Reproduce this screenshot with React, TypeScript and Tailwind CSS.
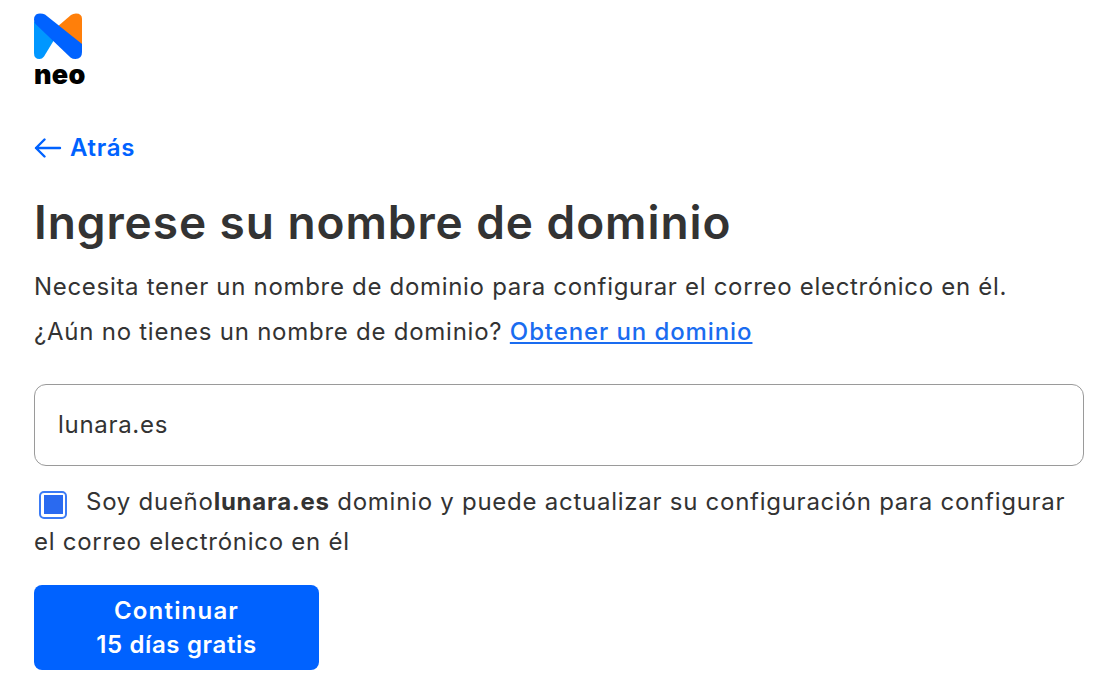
const font = { fontFamily: "Inter, 'Open Sans', sans-serif" };

function NeoLogo() {
  return (
    <div className="flex w-[52px] flex-col items-start">
      <svg width="48" height="46" viewBox="0 0 48 46" fill="none" className="block">
        <path d="M23 14 L37 2 Q39 0.500 42 0.500 Q48 0.500 48 6 L48 36 L30 26 Z" fill="#ff7f0a" />
        <path d="M0 8 L20 27 L10 43.500 Q8 46 5.500 46 Q0 46 0 40 Z" fill="#0097ff" />
        <path d="M2 1.500 Q4 0.500 6 0.500 Q9 0.500 11 1.500 L48 31 L48 39 Q48 46 41.500 46 Q38.500 46 36.500 44.500 L1.500 11 Q0 9.500 0 6.500 Q0 3.500 2 1.500 Z" fill="#0062ff" />
      </svg>
      <span className="mt-[3px] text-[27px] leading-[26px] font-black tracking-[0.3px] text-black">neo</span>
    </div>
  );
}

export default function App() {
  return (
    <div className="min-h-[687px] bg-white pt-[13px] pr-[9px] pl-[34px] text-[#333333]" style={font}>
      <NeoLogo />

      <a className="mt-[45px] flex items-center gap-[8px] text-[24px] leading-[30px] font-semibold tracking-[0.7px] text-[#0062ff]">
        <svg width="28" height="20" viewBox="0 0 28 20" fill="none" stroke="#0062ff" strokeWidth="2.4" strokeLinecap="round" strokeLinejoin="round">
          <path d="M2 10 H26 M10.500 1.500 L2 10 L10.500 18.500" />
        </svg>
        Atrás
      </a>

      <h1 className="mt-[28px] text-[46px] leading-[62px] font-semibold tracking-[0.93px]">Ingrese su nombre de dominio</h1>

      <p className="mt-[16px] text-[24px] leading-[36px] tracking-[0.69px]">Necesita tener un nombre de dominio para configurar el correo electrónico en él.</p>
      <p className="mt-[9px] text-[24px] leading-[36px] tracking-[0.75px]">
        ¿Aún no tienes un nombre de dominio? <a className="font-medium tracking-[0.9px] text-[#1a6cf0] underline">Obtener un dominio</a>
      </p>

      <div className="mt-[34px] flex h-[82px] items-center rounded-[12px] border border-[#9a9a9a] px-[23px] text-[24px] tracking-[0.7px]">lunara.es</div>

      <div className="mt-[16px] text-[24px] leading-[40px] tracking-[0.74px]">
        <span className="mr-[19px] ml-[5px] inline-flex h-[28px] w-[28px] items-center justify-center rounded-[5px] border-2 border-[#3b7bf5] align-[-4px]">
          <span className="h-[19px] w-[19px] bg-[#2a6af0]" />
        </span>
        Soy dueño<strong className="font-bold">lunara.es</strong> dominio y puede actualizar su configuración para configurar el correo electrónico en él
      </div>

      <button className="mt-[23px] flex h-[85px] w-[285px] flex-col items-center justify-center rounded-[8px] bg-[#0062ff] text-[24px] leading-[34px] font-semibold text-white">
        <span className="tracking-[1.2px]">Continuar</span>
        <span className="tracking-[0.65px]">15 días gratis</span>
      </button>
    </div>
  );
}
